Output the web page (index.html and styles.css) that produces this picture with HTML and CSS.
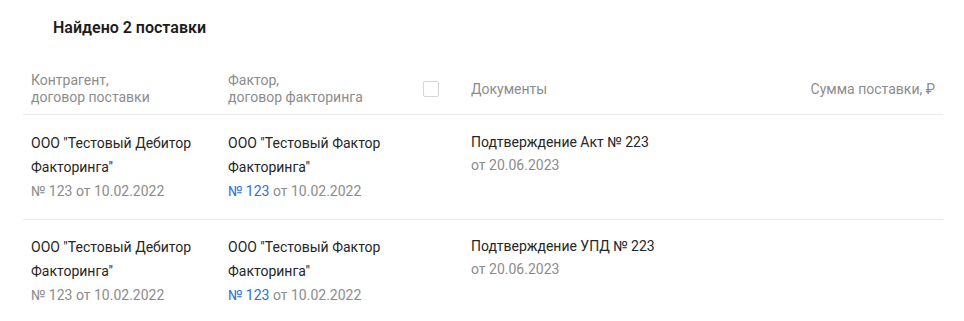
FILE: index.html
```html
<!DOCTYPE html>
<html lang="ru">
<head>
<meta charset="utf-8">
<link rel="stylesheet" href="styles.css">
</head>
<body>
<div class="page">
  <h2 class="title">Найдено 2 поставки</h2>
  <div class="table">
    <div class="row head">
      <div class="cell">Контрагент,<br>договор поставки</div>
      <div class="cell">Фактор,<br>договор факторинга</div>
      <div class="cell center"><span class="checkbox"></span></div>
      <div class="cell center">Документы</div>
      <div class="cell center right">Сумма поставки, ₽</div>
    </div>
    <div class="row">
      <div class="cell"><div>ООО "Тестовый Дебитор Факторинга"</div><div class="muted">№ 123 от 10.02.2022</div></div>
      <div class="cell"><div>ООО "Тестовый Фактор Факторинга"</div><div class="muted"><a class="link">№ 123</a> от 10.02.2022</div></div>
      <div class="cell"></div>
      <div class="cell docs"><div>Подтверждение Акт № 223</div><div class="muted">от 20.06.2023</div></div>
      <div class="cell"></div>
    </div>
    <div class="row last">
      <div class="cell"><div>ООО "Тестовый Дебитор Факторинга"</div><div class="muted">№ 123 от 10.02.2022</div></div>
      <div class="cell"><div>ООО "Тестовый Фактор Факторинга"</div><div class="muted"><a class="link">№ 123</a> от 10.02.2022</div></div>
      <div class="cell"></div>
      <div class="cell docs"><div>Подтверждение УПД № 223</div><div class="muted">от 20.06.2023</div></div>
      <div class="cell"></div>
    </div>
  </div>
</div>
</body>
</html>
```

FILE: styles.css
```css
* { box-sizing: border-box; }
html, body { margin: 0; padding: 0; background: #fff; }
body {
  font-family: Roboto, "Noto Sans", "Liberation Sans", sans-serif;
  color: #262626;
  font-size: 14px;
}
.page { padding: 18px 0 0 23px; width: 943px; }
.title {
  margin: 0 0 0 30px;
  font-size: 16px;
  line-height: 20px;
  font-weight: 600;
  color: #1c1c1c;
}
.table { margin-top: 27px; }
.row {
  display: grid;
  grid-template-columns: 197px 195px 48px 1fr auto;
  border-bottom: 1px solid #ebebeb;
  padding: 16px 0 16px;
  line-height: 24px;
}
.row.last { border-bottom: none; padding-top: 15px; }
.row.head {
  padding: 7px 0 8px;
  line-height: 17px;
  color: #8c8c8c;
}
.cell { padding: 0 8px; }
.center { display: flex; align-items: center; }
.right { justify-content: flex-end; }
.docs { line-height: 23px; }
.muted { color: #8c8c8c; }
.link { color: #2f6fd6; text-decoration: none; }
.checkbox {
  display: block;
  width: 16px;
  height: 16px;
  border: 1px solid #d6d6d6;
  border-radius: 2px;
}
```
